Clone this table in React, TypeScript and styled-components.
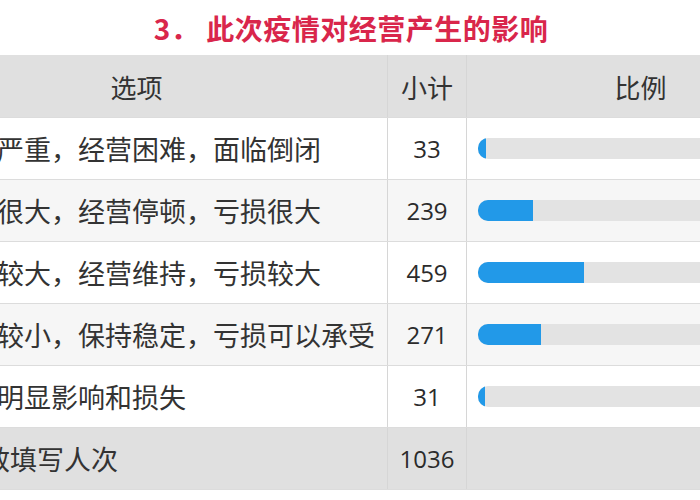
import React from "react";
import styled, { createGlobalStyle } from "styled-components";

const GlobalStyle = createGlobalStyle`
  html, body {
    margin: 0;
    padding: 0;
    overflow: hidden;
    background: #ffffff;
  }
  body {
    font-family: "Noto Sans CJK SC", "Noto Sans", sans-serif;
  }
`;

const Page = styled.div`
  width: 700px;
  height: 500px;
  overflow: hidden;
  background: #ffffff;
`;

const Title = styled.h2`
  margin: 0;
  height: 55px;
  display: flex;
  align-items: center;
  justify-content: center;
  padding-left: 2px;
  font-size: 28px;
  font-weight: 700;
  color: #d9264b;
  letter-spacing: 0.5px;
`;

const Table = styled.div`
  margin-left: -114px;
  width: 929px;
  display: flex;
  flex-direction: column;
`;

const Row = styled.div<{ $bg: string; $height: number }>`
  display: grid;
  grid-template-columns: 502px 79px 348px;
  height: ${(p) => p.$height}px;
  background: ${(p) => p.$bg};
  border-bottom: 1px solid #dcdcdc;
  box-sizing: border-box;
`;

const Cell = styled.div<{ $align?: "left" | "center"; $pad?: number }>`
  display: flex;
  align-items: center;
  justify-content: ${(p) => (p.$align === "left" ? "flex-start" : "center")};
  padding-left: ${(p) => p.$pad ?? 0}px;
  border-right: 1px solid #d6d6d6;
  font-size: 26px;
  color: #333333;
  white-space: nowrap;
  overflow: hidden;
`;

const LabelCell = styled(Cell)`
  font-size: 27px;
`;

const NumCell = styled(Cell)`
  font-family: "Open Sans", "Noto Sans", sans-serif;
  font-size: 24px;
  color: #2b2b2b;
`;

const BarCell = styled.div`
  display: flex;
  align-items: center;
  padding-left: 11px;
`;

const Track = styled.div`
  width: 240px;
  height: 21px;
  border-radius: 10px;
  background: #e3e3e3;
  overflow: hidden;
  display: flex;
`;

const Fill = styled.div`
  height: 100%;
  background: #2299e8;
`;

const rows = [
  { label: "影响严重，经营困难，面临倒闭", count: 33 },
  { label: "影响很大，经营停顿，亏损很大", count: 239 },
  { label: "影响较大，经营维持，亏损较大", count: 459 },
  { label: "影响较小，保持稳定，亏损可以承受", count: 271 },
  { label: "没有明显影响和损失", count: 31 },
];

const total = 1036;

export default function App() {
  return (
    <Page>
      <GlobalStyle />
      <Title>3． 此次疫情对经营产生的影响</Title>
      <Table>
        <Row $bg="#e0e0e0" $height={63}>
          <Cell>选项</Cell>
          <Cell>小计</Cell>
          <Cell>比例</Cell>
        </Row>
        {rows.map((r, i) => (
          <Row key={r.label} $bg={i % 2 === 1 ? "#f6f6f6" : "#ffffff"} $height={62}>
            <LabelCell $align="left" $pad={57}>
              {r.label}
            </LabelCell>
            <NumCell>{r.count}</NumCell>
            <BarCell>
              <Track>
                <Fill style={{ width: `${(r.count / total) * 100}%` }} />
              </Track>
            </BarCell>
          </Row>
        ))}
        <Row $bg="#e0e0e0" $height={62}>
          <LabelCell $align="left" $pad={16}>
            本题有效填写人次
          </LabelCell>
          <NumCell>{total}</NumCell>
          <BarCell />
        </Row>
      </Table>
    </Page>
  );
}
